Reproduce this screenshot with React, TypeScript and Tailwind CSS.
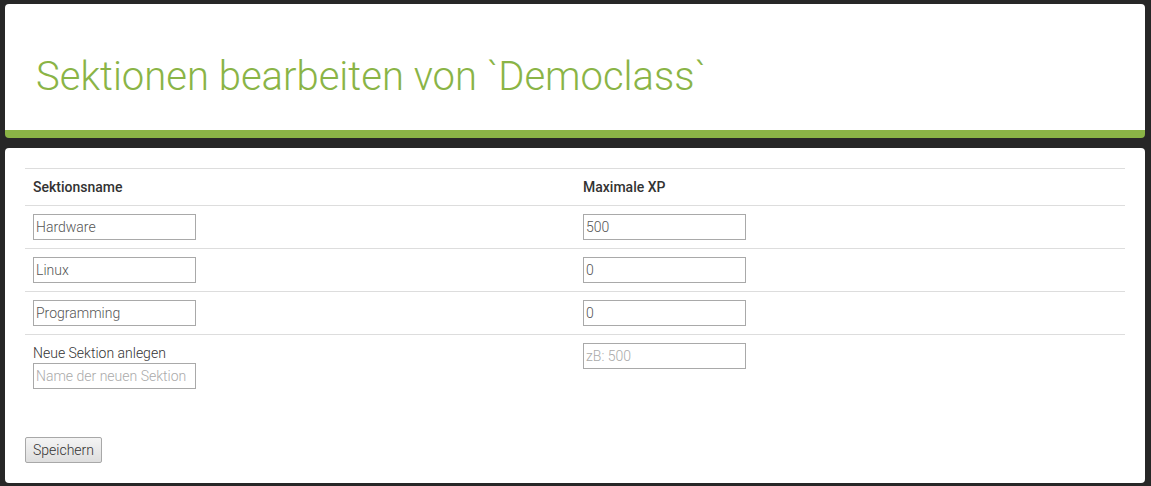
import { useState } from 'react'

type Section = { name: string; xp: string }

const initial: Section[] = [
  { name: 'Hardware', xp: '500' },
  { name: 'Linux', xp: '0' },
  { name: 'Programming', xp: '0' },
]

function TextInput({ value, placeholder }: { value?: string; placeholder?: string }) {
  return (
    <input
      type="text"
      defaultValue={value}
      placeholder={placeholder}
      className="block w-[163px] h-[26px] border border-[#a9a9a9] bg-white px-[2px] text-[14px] font-light text-[#555] placeholder:text-[#aaa] outline-none"
    />
  )
}

export default function App() {
  const [sections] = useState(initial)

  return (
    <div className="min-h-[486px] bg-[#272727] pt-[4px] pb-[3px] pl-[5px] pr-[6px] font-['Roboto',sans-serif]">
      <header className="rounded-[4px] bg-white border-b-[8px] border-[#8ab446] pt-[50px] pb-[30px] px-[31px]">
        <h1 className="text-[40px] leading-[46px] font-light text-[#8ab446]">
          Sektionen bearbeiten von `Democlass`
        </h1>
      </header>

      <main className="mt-[10px] rounded-[4px] bg-white p-[20px]">
        <table className="w-full table-fixed border-collapse text-[14px] text-[#333]">
          <thead>
            <tr className="border-y border-[#ddd]">
              <th className="w-1/2 px-[8px] py-[8px] text-left font-medium leading-[20px]">Sektionsname</th>
              <th className="w-1/2 px-[8px] py-[8px] text-left font-medium leading-[20px]">Maximale XP</th>
            </tr>
          </thead>
          <tbody>
            {sections.map((s) => (
              <tr key={s.name} className="border-b border-[#ddd]">
                <td className="px-[8px] py-[8px] align-top">
                  <TextInput value={s.name} />
                </td>
                <td className="px-[8px] py-[8px] align-top">
                  <TextInput value={s.xp} />
                </td>
              </tr>
            ))}
            <tr>
              <td className="px-[8px] py-[8px] align-top">
                <div className="leading-[20px] font-light text-[#333]">Neue Sektion anlegen</div>
                <TextInput placeholder="Name der neuen Sektion" />
              </td>
              <td className="px-[8px] py-[8px] align-top">
                <TextInput placeholder="zB: 500" />
              </td>
            </tr>
          </tbody>
        </table>

        <button className="mt-[40px] h-[26px] px-[7px] rounded-[2px] border border-[#a8a8a8] bg-gradient-to-b from-[#f4f4f4] to-[#dedede] text-[14px] font-light text-[#333]">
          Speichern
        </button>
      </main>
    </div>
  )
}
